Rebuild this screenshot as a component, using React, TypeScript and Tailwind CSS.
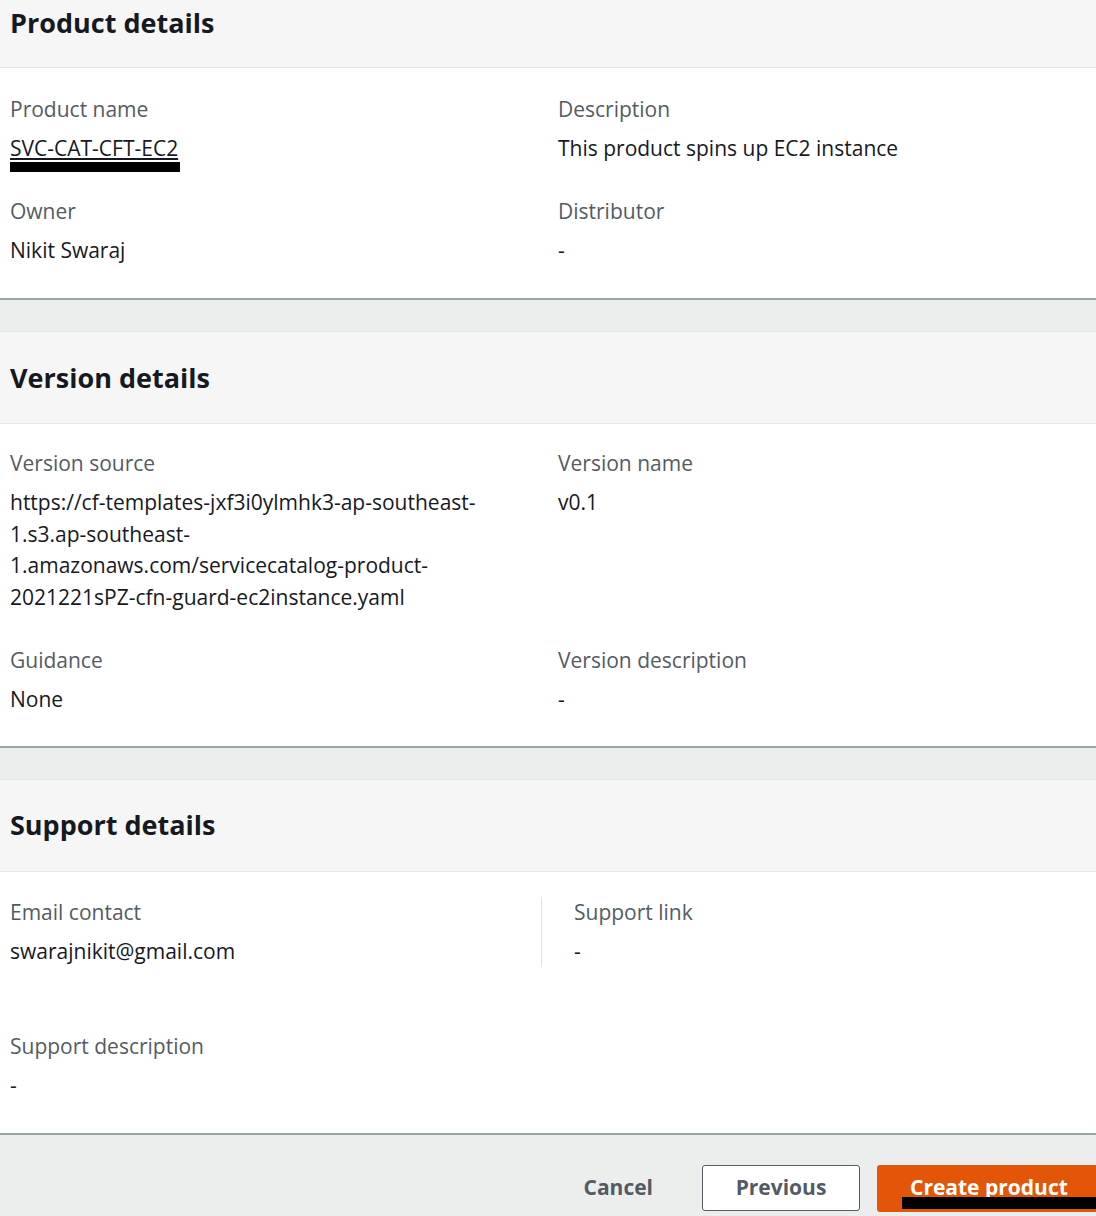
import React from 'react'

type Field = { label: string; value: React.ReactNode; valueClass?: string }

function Label(props: { children: React.ReactNode }) {
  return <div className="text-[21px] leading-[30px] text-[#545b64]">{props.children}</div>
}

function Value(props: { children: React.ReactNode; className?: string }) {
  return (
    <div className={`mt-[9px] text-[21px] leading-[31.5px] text-[#16191f] break-words ${props.className ?? ''}`}>
      {props.children}
    </div>
  )
}

function FieldBlock(props: Field) {
  return (
    <div>
      <Label>{props.label}</Label>
      <Value className={props.valueClass}>{props.value}</Value>
    </div>
  )
}

function SectionHeader(props: { title: string; cropped?: boolean }) {
  return (
    <div
      className={
        props.cropped
          ? 'h-[68px] bg-[#f6f6f6] border-b border-[#e3e6e6] px-[10px] pt-[5px]'
          : 'h-[93px] bg-[#f6f6f6] border-y border-[#e3e6e6] px-[10px] flex items-center'
      }
    >
      <h2 className="text-[27px] leading-[36px] font-bold text-[#16191f]">{props.title}</h2>
    </div>
  )
}

function Gap() {
  return <div className="h-[31px] bg-[#eceded]" />
}

export default function App() {
  return (
    <div className="w-[1096px] h-[1216px] overflow-hidden bg-[#eceded] font-['Open_Sans',sans-serif]">
      {/* Product details */}
      <section className="bg-white border-b-2 border-[#9aa3a5]">
        <SectionHeader title="Product details" cropped />
        <div className="grid grid-cols-2 gap-x-[20px] gap-y-[31px] px-[10px] pt-[26px] pb-[32px]">
          <FieldBlock
            label="Product name"
            value={
              <span className="relative inline-block">
                <span className="underline underline-offset-2">SVC-CAT-CFT-EC2</span>
                <span className="absolute left-0 -right-[2px] top-[29px] h-[10px] bg-black" />
              </span>
            }
          />
          <FieldBlock label="Description" value="This product spins up EC2 instance" />
          <FieldBlock label="Owner" value="Nikit Swaraj" />
          <FieldBlock label="Distributor" value="-" />
        </div>
      </section>

      <Gap />

      {/* Version details */}
      <section className="bg-white border-b-2 border-[#9aa3a5]">
        <SectionHeader title="Version details" />
        <div className="grid grid-cols-2 gap-x-[20px] gap-y-[32px] px-[10px] pt-[24px] pb-[30px]">
          <FieldBlock
            label="Version source"
            valueClass="max-w-[500px]"
            value="https://cf-templates-jxf3i0ylmhk3-ap-southeast-1.s3.ap-southeast-1.amazonaws.com/servicecatalog-product-2021221sPZ-cfn-guard-ec2instance.yaml"
          />
          <FieldBlock label="Version name" value="v0.1" />
          <FieldBlock label="Guidance" value="None" />
          <FieldBlock label="Version description" value="-" />
        </div>
      </section>

      <Gap />

      {/* Support details */}
      <section className="bg-white border-b-2 border-[#9aa3a5]">
        <SectionHeader title="Support details" />
        <div className="px-[10px] pt-[25px] pb-[31px]">
          <div className="flex">
            <div className="w-[531px]">
              <FieldBlock label="Email contact" value="swarajnikit@gmail.com" />
            </div>
            <div className="border-l border-[#e3e6e6] pl-[32px]">
              <FieldBlock label="Support link" value="-" />
            </div>
          </div>
          <div className="mt-[64px]">
            <FieldBlock label="Support description" value="-" />
          </div>
        </div>
      </section>

      {/* Footer actions */}
      <div className="flex justify-end items-start gap-[17px] pt-[30px]">
        <button className="px-[32px] h-[46px] text-[21px] font-bold text-[#545b64]">Cancel</button>
        <button className="w-[158px] h-[46px] border border-[#545b64] rounded-[3px] bg-white text-[21px] font-bold text-[#545b64]">
          Previous
        </button>
        <button className="relative w-[240px] h-[47px] -mr-[21px] rounded-[3px] bg-[#e35609] text-[21px] font-bold text-white text-left pl-[33px]">
          Create product
          <span className="absolute left-[25px] right-0 top-[32px] h-[12px] bg-black" />
        </button>
      </div>
    </div>
  )
}
